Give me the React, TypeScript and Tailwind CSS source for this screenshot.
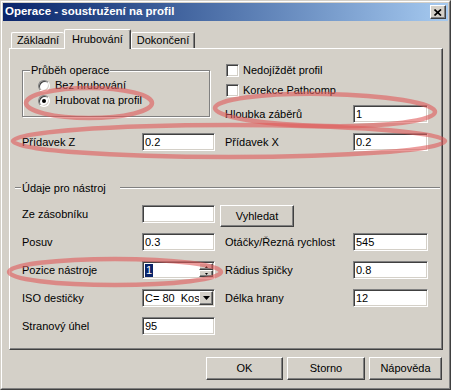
import React from 'react';

const raised =
  'bg-[#d4d0c8] border border-t-white border-l-white border-r-[#404040] border-b-[#404040] shadow-[inset_-1px_-1px_0_#808080]';
const sunken =
  'bg-white border border-t-[#808080] border-l-[#808080] border-r-white border-b-white shadow-[inset_1px_1px_0_#404040,inset_-1px_-1px_0_#d4d0c8]';

function Edit({ value, className = '', children }: { value?: string; className?: string; children?: React.ReactNode }) {
  return (
    <div className={`h-[18px] flex items-center pl-[2px] leading-none ${sunken} ${className}`}>
      {value}
      {children}
    </div>
  );
}

function Label({ text, className = '' }: { text: string; className?: string }) {
  return <div className={`leading-none whitespace-nowrap ${className}`}>{text}</div>;
}

function Checkbox({ label }: { label: string }) {
  return (
    <div className="h-[16px] flex items-center">
      <div className={`ml-[1px] w-[13px] h-[13px] ${sunken}`} />
      <span className="ml-[4px] leading-none">{label}</span>
    </div>
  );
}

function Radio({ label, checked = false }: { label: string; checked?: boolean }) {
  return (
    <div className="h-[15px] flex items-center">
      <div className="w-[12px] h-[12px] rounded-full bg-white border border-t-[#808080] border-l-[#808080] border-r-white border-b-white shadow-[inset_1px_1px_0_#404040,inset_-1px_-1px_0_#d4d0c8] flex items-center justify-center">
        {checked && <div className="w-[4px] h-[4px] rounded-full bg-black" />}
      </div>
      <span className="ml-[5px] leading-none">{label}</span>
    </div>
  );
}

function Tab({ label, selected = false, className = '' }: { label: string; selected?: boolean; className?: string }) {
  return (
    <div
      className={`flex justify-center rounded-t-[2px] border border-b-0 border-t-white border-l-white border-r-[#404040] shadow-[inset_-1px_0_0_#808080] bg-[#d4d0c8] leading-[13px] ${
        selected ? 'h-[20px] pt-[3px] relative z-10' : 'h-[16px] pt-[1px] mb-px'
      } ${className}`}
    >
      {label}
    </div>
  );
}

export default function App() {
  return (
    <div className="relative w-[451px] h-[390px] bg-[#d4d0c8] text-[11px] text-black font-['Liberation_Sans',Arial,sans-serif] border border-t-[#d4d0c8] border-l-[#d4d0c8] border-r-[#404040] border-b-[#404040]">
      <div className="h-full flex flex-col p-px border border-t-white border-l-white border-r-[#808080] border-b-[#808080]">
        {/* Title bar */}
        <div className="h-[18px] flex items-center justify-between pl-[2px] pr-[2px] bg-gradient-to-r from-[#0a246a] to-[#a6caf0]">
          <span className="text-white font-bold text-[11.5px] leading-none">Operace - soustružení na profil</span>
          <div className={`w-[16px] h-[14px] flex items-center justify-center ${raised}`}>
            <svg width="8" height="7" viewBox="0 0 8 7">
              <path d="M0.5 0.5 L7 6.5 M7 0.5 L0.5 6.5" stroke="#000" strokeWidth="1.7" />
            </svg>
          </div>
        </div>

        {/* Tabs */}
        <div className="mt-[8px] -mb-px ml-[8px] h-[20px] flex items-end relative z-10">
          <Tab label="Základní" className="w-[53px] border-r-0 shadow-none" />
          <Tab label="Hrubování" selected className="w-[67px]" />
          <Tab label="Dokončení" className="w-[64px]" />
        </div>

        {/* Tab panel */}
        <div className={`ml-[6px] w-[434px] h-[302px] pl-[12px] flex flex-col ${raised}`}>
          <div className="flex items-start">
            <div className="w-[193px]">
              <div className="relative mt-[21px] w-[188px] h-[47px] border border-[#808080] shadow-[inset_1px_1px_0_white,1px_1px_0_white] pl-[15px] pt-[7px]">
                <span className="absolute -top-[7px] left-[7px] px-[1px] bg-[#d4d0c8] leading-[12px]">Průběh operace</span>
                <Radio label="Bez hrubování" />
                <Radio label="Hrubovat na profil" checked />
              </div>
            </div>
            <div className="ml-[10px] flex flex-col">
              <div className="mt-[13px]">
                <Checkbox label="Nedojíždět profil" />
              </div>
              <div className="mt-[4px]">
                <Checkbox label="Korekce Pathcomp" />
              </div>
              <div className="mt-[7px] flex items-center">
                <Label text="Hloubka záběrů" className="w-[128px]" />
                <Edit value="1" className="w-[75px]" />
              </div>
            </div>
          </div>

          <div className="mt-[10px] flex items-center">
            <Label text="Přídavek Z" className="w-[120px]" />
            <Edit value="0.2" className="w-[73px]" />
            <Label text="Přídavek X" className="ml-[10px] w-[128px]" />
            <Edit value="0.2" className="w-[75px]" />
          </div>

          {/* Údaje pro nástroj */}
          <div className="mt-[30px] -ml-[7px] w-[425px] h-[14px] flex items-center">
            <div className="w-[6px] h-[2px] border-t border-t-[#808080] border-b border-b-white" />
            <span className="ml-[1px] pr-[14px] leading-none">Údaje pro nástroj</span>
            <div className="flex-1 h-[2px] border-t border-t-[#808080] border-b border-b-white" />
          </div>

          <div className="mt-[10px] h-[18px] flex items-center">
            <Label text="Ze zásobníku" className="w-[120px]" />
            <Edit className="w-[73px]" />
            <div className={`self-start ml-[5px] w-[74px] h-[22px] flex items-center justify-center leading-none ${raised}`}>
              Vyhledat
            </div>
          </div>

          <div className="mt-[10px] flex items-center">
            <Label text="Posuv" className="w-[120px]" />
            <Edit value="0.3" className="w-[73px]" />
            <Label text="Otáčky/Řezná rychlost" className="ml-[10px] w-[128px]" />
            <Edit value="545" className="w-[75px]" />
          </div>

          <div className="mt-[10px] flex items-center">
            <Label text="Pozice nástroje" className="w-[120px]" />
            <Edit className="w-[73px] pr-[1px]">
              <span className="h-[13px] px-[1px] bg-[#0a246a] text-white leading-[13px]">1</span>
              <div className="ml-auto w-[14px] h-[14px] flex flex-col">
                <div className={`h-[7px] flex items-center justify-center ${raised}`}>
                  <svg width="3" height="2" viewBox="0 0 3 2">
                    <path d="M0 2 L1.5 0 L3 2 Z" fill="#000" />
                  </svg>
                </div>
                <div className={`h-[7px] flex items-center justify-center ${raised}`}>
                  <svg width="3" height="2" viewBox="0 0 3 2">
                    <path d="M0 0 L3 0 L1.5 2 Z" fill="#000" />
                  </svg>
                </div>
              </div>
            </Edit>
            <Label text="Rádius špičky" className="ml-[10px] w-[128px]" />
            <Edit value="0.8" className="w-[75px]" />
          </div>

          <div className="mt-[10px] flex items-center">
            <Label text="ISO destičky" className="w-[120px]" />
            <Edit className="w-[73px] pr-[1px] overflow-hidden">
              <span className="flex-1 min-w-0 overflow-hidden whitespace-pre">C= 80  Kos</span>
              <div className={`w-[14px] h-[14px] shrink-0 flex items-center justify-center ${raised}`}>
                <svg width="7" height="4" viewBox="0 0 7 4">
                  <path d="M0 0 L7 0 L3.5 4 Z" fill="#000" />
                </svg>
              </div>
            </Edit>
            <Label text="Délka hrany" className="ml-[10px] w-[128px]" />
            <Edit value="12" className="w-[75px]" />
          </div>

          <div className="mt-[10px] flex items-center">
            <Label text="Stranový úhel" className="w-[120px]" />
            <Edit value="95" className="w-[73px]" />
          </div>
        </div>

        {/* Buttons */}
        <div className="mt-[7px] pr-[6px] flex justify-end gap-[4px]">
          <div className={`w-[77px] h-[23px] flex items-center justify-center leading-none ${raised}`}>OK</div>
          <div className={`w-[78px] h-[23px] flex items-center justify-center leading-none ${raised}`}>Storno</div>
          <div className={`w-[73px] h-[23px] flex items-center justify-center leading-none ${raised}`}>Nápověda</div>
        </div>
      </div>

      {/* red marker annotations */}
      <svg className="absolute left-0 top-0 pointer-events-none" width="451" height="390" viewBox="0 0 451 390">
        <g fill="none" stroke="#e05a5a" strokeOpacity="0.6" strokeWidth="4.5">
          <ellipse cx="88" cy="102" rx="63" ry="15" />
          <ellipse cx="324" cy="109" rx="110" ry="16" transform="rotate(1 324 109)" />
          <ellipse cx="228" cy="140" rx="216" ry="16" />
          <ellipse cx="114" cy="271" rx="106" ry="13" />
        </g>
      </svg>
    </div>
  );
}
